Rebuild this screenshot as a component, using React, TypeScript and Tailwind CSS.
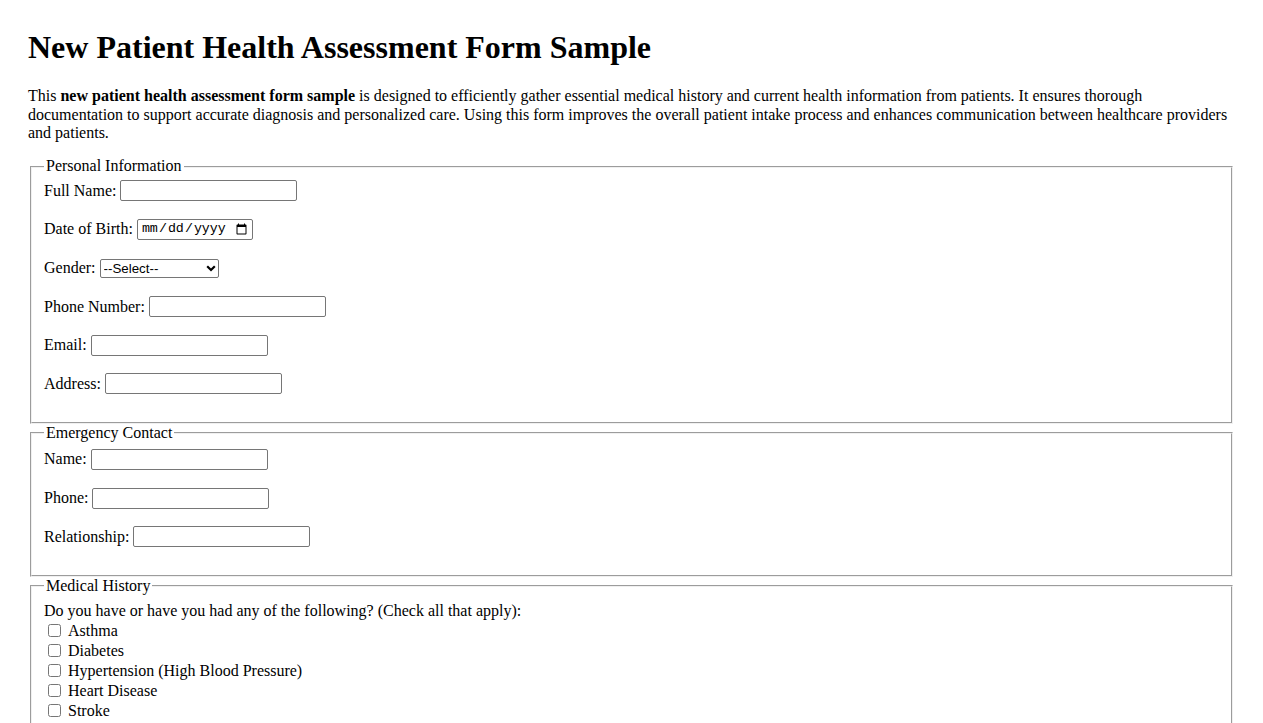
import React from "react";

const inputCls =
  "h-[21px] w-[177px] border border-[#767676] rounded-[2px] bg-white px-[2px] text-[13.33px] font-['Liberation_Sans',Arial,sans-serif]";

function Field({ label, type = "text" }: { label: string; type?: string }) {
  return (
    <div className="flex items-center gap-[4px] h-[21px] mb-[17.6px]">
      <span>{label}</span>
      <input type={type} className={inputCls} />
    </div>
  );
}

function Group({
  title,
  pad = "pt-[5.6px]",
  children,
}: {
  title: string;
  pad?: string;
  children: React.ReactNode;
}) {
  return (
    <fieldset className={`mx-[2px] px-[12px] pb-[10px] border-2 [border-style:groove] border-[#f0f0f0] ${pad}`}>
      <legend className="px-[2px] leading-[18.4px]">{title}</legend>
      {children}
    </fieldset>
  );
}

const conditions = [
  "Asthma",
  "Diabetes",
  "Hypertension (High Blood Pressure)",
  "Heart Disease",
  "Stroke",
  "Cancer",
  "Kidney Disease",
  "Thyroid Disorder",
];

export default function App() {
  return (
    <div className="bg-white text-black px-[28px] pt-[29px] pb-[28px] text-[16px] leading-[18.4px] font-['Liberation_Serif','Times_New_Roman',serif]">
      <h1 className="text-[32px] font-bold leading-[36.8px] mb-[21.44px]">
        New Patient Health Assessment Form Sample
      </h1>
      <p className="mb-[15px]">
        This <b>new patient health assessment form sample</b> is designed to efficiently gather essential medical
        history and current health information from patients. It ensures thorough documentation to support accurate
        diagnosis and personalized care. Using this form improves the overall patient intake process and enhances
        communication between healthcare providers and patients.
      </p>

      <form>
        <Group title="Personal Information" pad="pt-[4.6px]">
          <Field label="Full Name:" />
          <div className="flex items-center gap-[4px] h-[21px] mb-[17.6px]">
            <span>Date of Birth:</span>
            <input
              type="date"
              className="h-[21px] w-[116px] border border-[#767676] rounded-[2px] bg-white pl-[3px] pr-[2px] text-[13.33px] font-['Liberation_Mono',monospace]"
            />
          </div>
          <div className="flex items-center gap-[4px] h-[21px] mb-[17.6px]">
            <span>Gender:</span>
            <div className="relative">
              <select className="appearance-none block h-[19px] w-[119px] border border-[#767676] rounded-[2px] bg-white pl-[3px] text-[13.33px] leading-[15px] font-['Liberation_Sans',Arial,sans-serif]">
                <option>--Select--</option>
                <option>Male</option>
                <option>Female</option>
                <option>Other</option>
              </select>
              <svg
                className="absolute right-[3px] top-[6px] pointer-events-none"
                width="10"
                height="7"
                viewBox="0 0 10 7"
              >
                <path d="M1.2 1.2l3.8 3.8 3.8-3.8" fill="none" stroke="#000" strokeWidth="2.2" />
              </svg>
            </div>
          </div>
          <Field label="Phone Number:" type="tel" />
          <Field label="Email:" type="email" />
          <Field label="Address:" />
        </Group>

        <Group title="Emergency Contact" pad="pt-[6.6px]">
          <Field label="Name:" />
          <Field label="Phone:" type="tel" />
          <Field label="Relationship:" />
        </Group>

        <Group title="Medical History" pad="pt-[5.6px]">
          <div className="h-[20px] flex items-center">
            Do you have or have you had any of the following? (Check all that apply):
          </div>
          {conditions.map((c) => (
            <label key={c} className="h-[20px] flex items-center">
              <input type="checkbox" className="w-[13px] h-[13px] ml-[4px] mr-[7px]" />
              <span>{c}</span>
            </label>
          ))}
          <div className="h-[20px] flex items-center mt-[8px]">Other conditions:</div>
          <textarea className="mt-[4px] w-[300px] h-[60px] border border-[#767676] rounded-[2px] p-[2px] text-[13.33px]" />
        </Group>
      </form>
    </div>
  );
}
